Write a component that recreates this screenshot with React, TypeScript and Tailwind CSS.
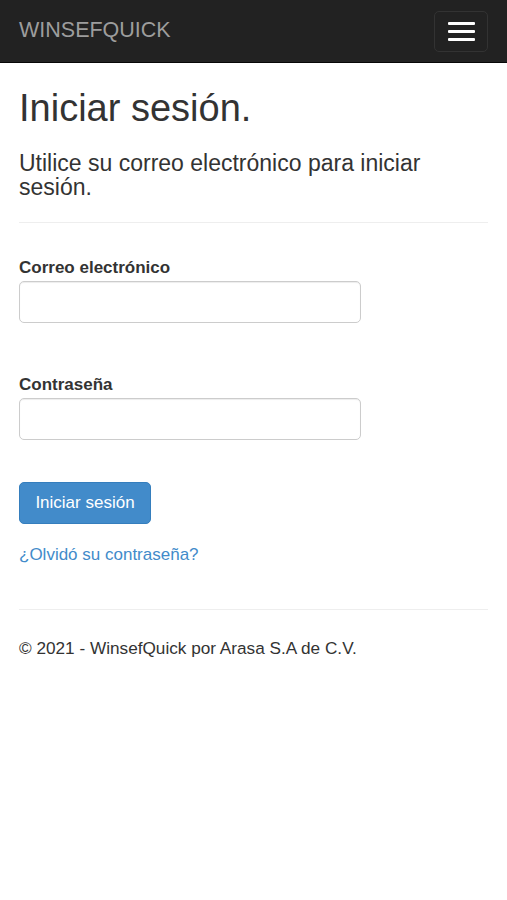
import React from "react";

export default function App() {
  return (
    <div className="min-h-[900px] bg-white text-[#333] font-['Liberation_Sans',Arial,sans-serif]">
      <nav className="h-[63px] bg-[#222] border-b border-[#080808] flex items-center justify-between pl-[19px] pr-[19px]">
        <span className="text-[21.5px] text-[#9d9d9d] leading-none">WINSEFQUICK</span>
        <button className="w-[54px] h-[41px] border border-[#333] rounded-[5px] flex flex-col items-center justify-center gap-[5px]">
          <span className="block w-[27px] h-[3px] bg-white rounded-[1px]" />
          <span className="block w-[27px] h-[3px] bg-white rounded-[1px]" />
          <span className="block w-[27px] h-[3px] bg-white rounded-[1px]" />
        </button>
      </nav>
      <main className="px-[19px]">
        <h2 className="mt-[25px] text-[38px] leading-[41px] font-medium text-[#333]">Iniciar sesión.</h2>
        <h4 className="mt-[22px] text-[23px] leading-[24px] font-medium text-[#333] pr-[40px]">
          Utilice su correo electrónico para iniciar sesión.
        </h4>
        <hr className="mt-[23px] mb-[35px] border-t border-[#eee]" />
        <div className="mb-[52px]">
          <label className="block text-[17px] font-bold leading-[20px] mb-[3px]">Correo electrónico</label>
          <input className="block w-[342px] h-[42px] border border-[#ccc] rounded-[5px] shadow-[inset_0_1px_1px_rgba(0,0,0,0.075)]" />
        </div>
        <div className="mb-[42px]">
          <label className="block text-[17px] font-bold leading-[20px] mb-[3px]">Contraseña</label>
          <input type="password" className="block w-[342px] h-[42px] border border-[#ccc] rounded-[5px] shadow-[inset_0_1px_1px_rgba(0,0,0,0.075)]" />
        </div>
        <button className="w-[132px] h-[42px] bg-[#428bca] border border-[#357ebd] rounded-[5px] text-white text-[17px]">
          Iniciar sesión
        </button>
        <p className="mt-[19px] text-[17px] leading-[24px] text-[#428bca]">¿Olvidó su contraseña?</p>
        <hr className="mt-[42px] mb-[26px] border-t border-[#eee]" />
        <footer className="text-[17.2px] leading-[24px] text-[#333]">© 2021 - WinsefQuick por Arasa S.A de C.V.</footer>
      </main>
    </div>
  );
}
